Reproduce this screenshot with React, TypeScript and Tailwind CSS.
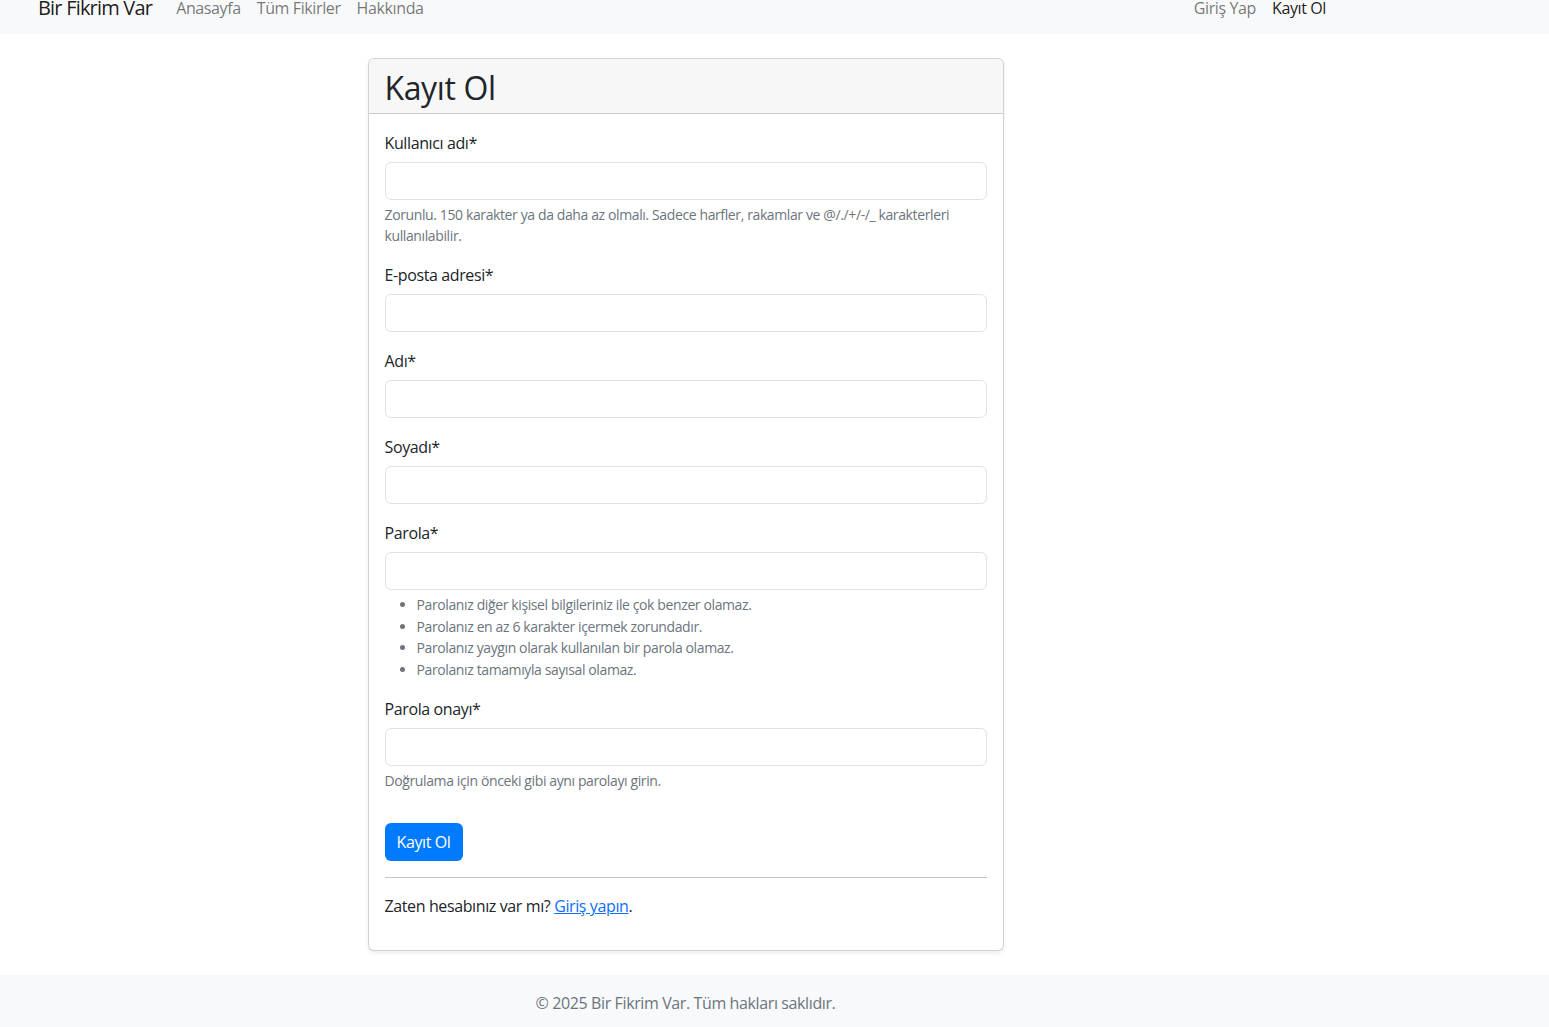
const font = { fontFamily: '"Segoe UI", "Open Sans", "Noto Sans", sans-serif' }

function Field({ label, help }: { label: string; help?: React.ReactNode }) {
    return (
        <div className="mb-4">
            <label className="relative top-px mb-2 block text-[16px] leading-6 text-[#212529]">{label}</label>
            <input
                type="text"
                className="block h-[38px] w-full rounded-[6px] border border-[#dee2e6] bg-white px-3 text-base outline-none"
            />
            {help}
        </div>
    )
}

const rules = [
    'Parolanız diğer kişisel bilgileriniz ile çok benzer olamaz.',
    'Parolanız en az 6 karakter içermek zorundadır.',
    'Parolanız yaygın olarak kullanılan bir parola olamaz.',
    'Parolanız tamamıyla sayısal olamaz.',
]

export default function App() {
    return (
        <div className="min-h-screen bg-white tracking-[-0.024em] text-[#212529]" style={font}>
            <nav className="flex h-[34px] items-start justify-between bg-[#f8f9fa] pl-[38px] pr-[215px]">
                <div className="-mt-[7px] flex items-center">
                    <span className="mr-4 text-[20px] leading-[30px] tracking-[-0.04em] text-black/90">Bir Fikrim Var</span>
                    <div className="flex">
                        {['Anasayfa', 'Tüm Fikirler', 'Hakkında'].map(l => (
                            <span key={l} className="px-2 text-base leading-6 text-black/55">{l}</span>
                        ))}
                    </div>
                </div>
                <div className="-mt-[4px] flex">
                    <span className="px-2 text-base leading-6 text-black/55">Giriş Yap</span>
                    <span className="px-2 text-base leading-6 text-black/90">Kayıt Ol</span>
                </div>
            </nav>

            <main className="w-[1371px] pt-6 pb-6">
                <div className="mx-auto w-[636px] overflow-hidden rounded-[6px] border border-black/[0.175] bg-white shadow-[0_2px_4px_rgba(0,0,0,0.075)]">
                    <div className="border-b border-black/[0.175] bg-[#f7f7f7] px-4 pt-[10px] pb-[6px]">
                        <h2 className="text-[32px] leading-[38px] font-normal text-[#212529]">Kayıt Ol</h2>
                    </div>
                    <div className="p-4">
                        <Field
                            label="Kullanıcı adı*"
                            help={
                                <div className="mt-1 text-[14px] leading-[21px] text-[#6c757d]">
                                    Zorunlu. 150 karakter ya da daha az olmalı. Sadece harfler, rakamlar ve @/./+/-/_ karakterleri kullanılabilir.
                                </div>
                            }
                        />
                        <Field label="E-posta adresi*" />
                        <Field label="Adı*" />
                        <Field label="Soyadı*" />
                        <Field
                            label="Parola*"
                            help={
                                <ul className="mt-1 list-disc pl-8 text-[14px] leading-[21.6px] text-[#6c757d]">
                                    {rules.map(r => (
                                        <li key={r}>{r}</li>
                                    ))}
                                </ul>
                            }
                        />
                        <Field
                            label="Parola onayı*"
                            help={
                                <div className="mt-1 text-[14px] leading-[21px] text-[#6c757d]">
                                    Doğrulama için önceki gibi aynı parolayı girin.
                                </div>
                            }
                        />
                        <button className="mt-4 h-[38px] rounded-[6px] bg-[#007bff] px-3 text-base leading-6 text-white">
                            Kayıt Ol
                        </button>
                        <hr className="my-4 border-0 border-t border-[#c4c4c4]" />
                        <p className="mb-4 text-base leading-6">
                            Zaten hesabınız var mı?{' '}
                            <a href="#" className="text-[#0d6efd] underline">
                                Giriş yapın
                            </a>
                            .
                        </p>
                    </div>
                </div>
            </main>

            <footer className="bg-[#f8f9fa] py-4">
                <div className="w-[1371px] text-center text-base leading-6 text-[#6c757d]">
                    © 2025 Bir Fikrim Var. Tüm hakları saklıdır.
                </div>
            </footer>
        </div>
    )
}
